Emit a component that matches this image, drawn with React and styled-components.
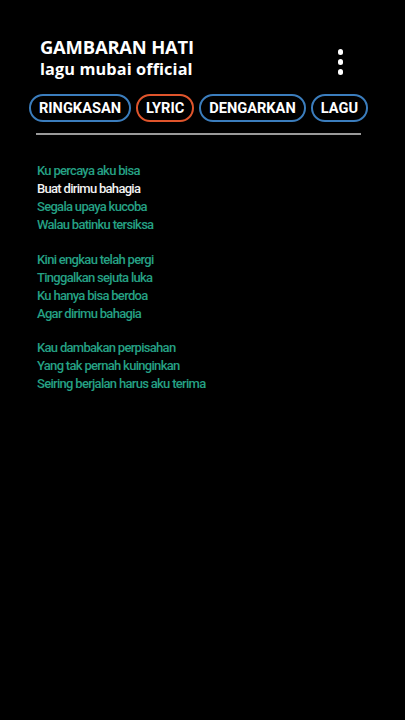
import React from "react";
import styled, { createGlobalStyle } from "styled-components";

const Global = createGlobalStyle`
  html, body { margin: 0; padding: 0; background: #000; }
  body { width: 405px; height: 720px; overflow: hidden; }
`;

const Page = styled.div`
  width: 405px;
  height: 720px;
  background: #000;
  display: flex;
  flex-direction: column;
`;

const Header = styled.header`
  display: flex;
  justify-content: space-between;
  align-items: flex-start;
  padding: 36px 0 0 40px;
  height: 57px;
  box-sizing: border-box;
`;

const Titles = styled.div`
  display: flex;
  flex-direction: column;
`;

const Title = styled.div`
  font-family: "Open Sans", sans-serif;
  font-weight: 700;
  font-size: 18.4px;
  line-height: 22px;
  color: #fff;
  letter-spacing: -0.2px;
`;

const Subtitle = styled.div`
  font-family: "Open Sans", sans-serif;
  font-weight: 700;
  font-size: 16.3px;
  line-height: 22px;
  color: #fff;
  letter-spacing: 0.1px;
`;

const Menu = styled.div`
  display: flex;
  flex-direction: column;
  gap: 4.5px;
  padding: 13px 62px 0 0;
`;

const Dot = styled.span`
  width: 5.5px;
  height: 5.5px;
  border-radius: 50%;
  background: #fff;
`;

const Tabs = styled.nav`
  display: flex;
  gap: 5px;
  padding: 37px 0 0 29px;
`;

const Tab = styled.div`
  height: 28px;
  box-sizing: border-box;
  padding: 0 ${(p) => p.$pad}px;
  border: 2px solid ${(p) => (p.$active ? "#e0552c" : "#3b7dbd")};
  border-radius: 14px;
  display: flex;
  align-items: center;
  font-family: Roboto, sans-serif;
  font-weight: 700;
  font-size: 14.6px;
  color: #fff;
  white-space: nowrap;
`;

const Divider = styled.div`
  margin: 11px 0 0 36px;
  width: 325px;
  height: 2px;
  background: #9a9a9a;
`;

const Lyrics = styled.div`
  padding: 27px 0 0 37px;
  display: flex;
  flex-direction: column;
  gap: 16.5px;
`;

const Stanza = styled.div`
  display: flex;
  flex-direction: column;
`;

const Line = styled.div`
  font-family: Roboto, sans-serif;
  font-weight: 500;
  font-size: 13px;
  line-height: 18px;
  letter-spacing: -0.7px;
  color: ${(p) => (p.$current ? "#f2f2f2" : "#25a184")};
`;

const stanzas = [
  ["Ku percaya aku bisa", "Buat dirimu bahagia", "Segala upaya kucoba", "Walau batinku tersiksa"],
  ["Kini engkau telah pergi", "Tinggalkan sejuta luka", "Ku hanya bisa berdoa", "Agar dirimu bahagia"],
  ["Kau dambakan perpisahan", "Yang tak pernah kuinginkan", "Seiring berjalan harus aku terima"],
];

const tabs = [
  { label: "RINGKASAN", pad: 8 },
  { label: "LYRIC", pad: 8, active: true },
  { label: "DENGARKAN", pad: 8 },
  { label: "LAGU", pad: 8 },
];

export default function App() {
  return (
    <Page>
      <Global />
      <Header>
        <Titles>
          <Title>GAMBARAN HATI</Title>
          <Subtitle>lagu mubai official</Subtitle>
        </Titles>
        <Menu>
          <Dot />
          <Dot />
          <Dot />
        </Menu>
      </Header>
      <Tabs>
        {tabs.map((t) => (
          <Tab key={t.label} $active={t.active} $pad={t.pad}>
            {t.label}
          </Tab>
        ))}
      </Tabs>
      <Divider />
      <Lyrics>
        {stanzas.map((s, i) => (
          <Stanza key={i}>
            {s.map((l, j) => (
              <Line key={j} $current={i === 0 && j === 1}>
                {l}
              </Line>
            ))}
          </Stanza>
        ))}
      </Lyrics>
    </Page>
  );
}
